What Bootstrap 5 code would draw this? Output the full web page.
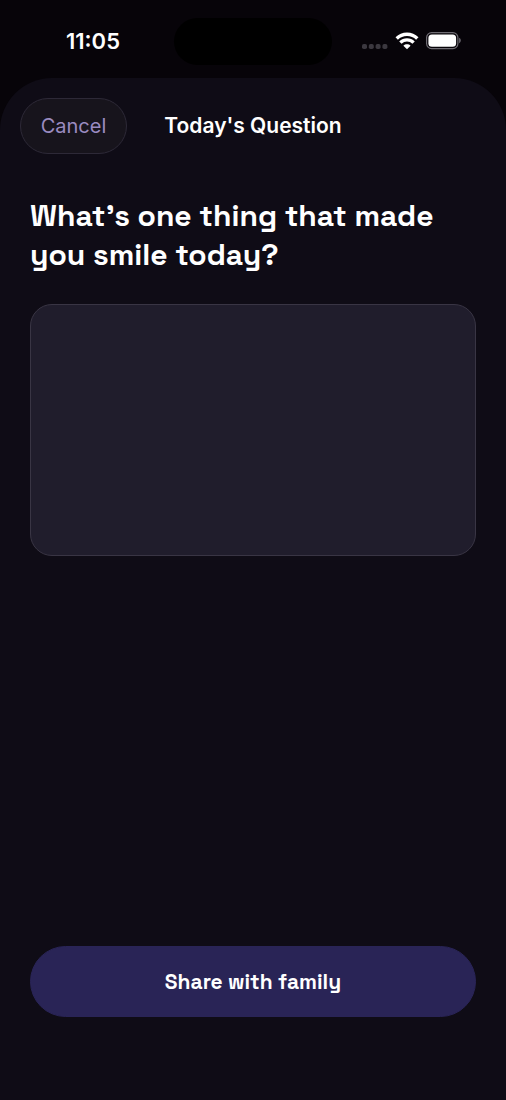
<!DOCTYPE html>
<html lang="en" data-bs-theme="dark">
<head>
<meta charset="utf-8">
<meta name="viewport" content="width=device-width, initial-scale=1">
<title>Today's Question</title>
<link href="https://cdn.jsdelivr.net/npm/bootstrap@5.3.0/dist/css/bootstrap.min.css" rel="stylesheet">
<style>
  body { background: #070409; color: #fff; font-family: Inter, "Liberation Sans", sans-serif; }
  .bar-grid { display: grid; grid-template-columns: 1fr auto 1fr; align-items: center; }
  .status-bar { height: 78px; padding: 4px 43px 0; }
  .status-bar .clock { font-size: 22px; line-height: 28px; font-weight: 600; padding-left: 23px; }
  .island { width: 158px; height: 47px; background: #000; }
  .sheet { background: #0f0c16; border-radius: 52px 52px 0 0; }
  .sheet-header { padding: 20px 20px 0; }
  .sheet-title { font-size: 21px; line-height: 28px; font-weight: 600; }
  .btn-cancel {
    --bs-btn-color: #9a8bc0; --bs-btn-bg: #17141c; --bs-btn-border-color: #2d2937;
    --bs-btn-hover-color: #b3a5d6; --bs-btn-hover-bg: #1e1a25; --bs-btn-hover-border-color: #3a3546;
    --bs-btn-font-size: 20px; --bs-btn-line-height: 28px;
    width: 107px; height: 56px; padding: 0;
  }
  .sheet-body { padding: 42px 30px 83px; }
  .question { font-family: "Space Grotesk", Inter, sans-serif; font-size: 30px; line-height: 39px; font-weight: 700; margin: 0 0 30px; }
  .answer { height: 252px; resize: none; background: #201d2c; border-color: #393544; border-radius: 22px; padding: 20px; font-size: 21px; }
  .answer:focus { background: #201d2c; border-color: #5a5290; }
  .btn-share {
    --bs-btn-color: #fff; --bs-btn-bg: #292456; --bs-btn-border-color: #292456;
    --bs-btn-hover-color: #fff; --bs-btn-hover-bg: #342e6b; --bs-btn-hover-border-color: #342e6b;
    --bs-btn-font-size: 21px; --bs-btn-line-height: 28px; --bs-btn-font-weight: 600;
    font-family: "Space Grotesk", Inter, sans-serif; height: 71px;
  }
</style>
</head>
<body class="min-vh-100 d-flex flex-column">
  <header class="status-bar bar-grid">
    <time class="clock" datetime="11:05">11:05</time>
    <div class="island rounded-pill"></div>
    <div class="d-flex align-items-center justify-content-end">
      <svg width="102" height="20" viewBox="0 0 102 20" role="img" aria-label="No signal, Wi-Fi connected, battery full">
        <g fill="#3b383f">
          <rect x="1" y="13" width="5" height="5" rx="1.8"/><rect x="7.800" y="13" width="5" height="5" rx="1.8"/>
          <rect x="14.600" y="13" width="5" height="5" rx="1.8"/><rect x="21.400" y="13" width="5" height="5" rx="1.8"/>
        </g>
        <g fill="none" stroke="#fff" stroke-width="3.400">
          <path d="M35.700 7.500C41.400 1.800 50.600 1.800 56.300 7.500"/>
          <path d="M39.400 11.600C43.100 8 48.900 8 52.600 11.600"/>
        </g>
        <path fill="#fff" d="M46 18.200L42.400 14.700C44.400 12.800 47.600 12.800 49.600 14.700Z"/>
        <rect x="65.600" y="1.600" width="31.300" height="16" rx="5" fill="none" stroke="#6f6c73" stroke-width="1.200"/>
        <rect x="67.400" y="3.400" width="27.700" height="12.400" rx="3.500" fill="#fff"/>
        <path fill="#6f6c73" d="M98.100 6.800C100.300 7.600 100.300 11.400 98.100 12.200Z"/>
      </svg>
    </div>
  </header>
  <main class="sheet flex-grow-1 d-flex flex-column">
    <div class="sheet-header bar-grid">
      <button type="button" class="btn btn-cancel rounded-pill">Cancel</button>
      <h1 class="sheet-title m-0">Today's Question</h1>
    </div>
    <form class="sheet-body flex-grow-1 d-flex flex-column">
      <label for="answer" class="question">What’s one thing that made you smile today?</label>
      <textarea id="answer" class="form-control answer"></textarea>
      <button type="button" class="btn btn-share rounded-pill w-100 mt-auto">Share with family</button>
    </form>
  </main>
  <script src="https://cdn.jsdelivr.net/npm/bootstrap@5.3.0/dist/js/bootstrap.bundle.min.js"></script>
</body>
</html>
